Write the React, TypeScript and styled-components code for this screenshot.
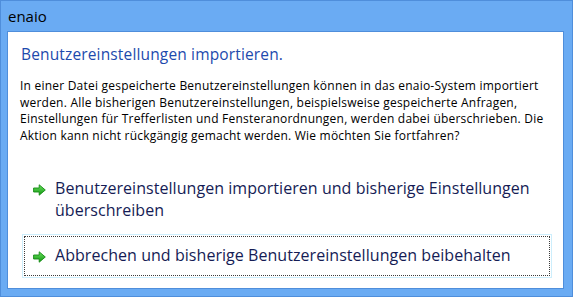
import React from 'react';
import styled, { createGlobalStyle } from 'styled-components';

const GlobalStyle = createGlobalStyle`
  html, body {
    margin: 0;
    padding: 0;
    background: #ffffff;
  }
  body {
    font-family: 'Open Sans', 'Noto Sans', sans-serif;
  }
`;

const Window = styled.div`
  width: 573px;
  height: 297px;
  box-sizing: border-box;
  display: flex;
  flex-direction: column;
  padding: 0 8px 7px 6px;
  background: #6aabf3;
  border: 1px solid #4f8edb;
`;

const TitleBar = styled.div`
  height: 30px;
  display: flex;
  align-items: center;
  padding-left: 1px;
  font-size: 15px;
  color: #000000;
`;

const Panel = styled.div`
  flex: 1;
  background: #ffffff;
  border: 1px solid #4f8edb;
  padding: 11px 12px 0 12px;
`;

const Heading = styled.div`
  font-size: 15.5px;
  letter-spacing: 0.15px;
  line-height: 22px;
  color: #1d4aad;
  padding-left: 1px;
`;

const Message = styled.p`
  margin: 13px 0 0 0;
  font-size: 12px;
  letter-spacing: 0.22px;
  line-height: 16.5px;
  color: #000000;
`;

const CommandList = styled.div`
  display: flex;
  flex-direction: column;
  gap: 2px;
  margin: 23px 0 0 2px;
  width: 530px;
`;

const CommandLink = styled.button<{ $focused?: boolean }>`
  display: flex;
  align-items: flex-start;
  gap: 9px;
  box-sizing: border-box;
  width: 100%;
  padding: 10px 16px 10px 10px;
  background: #ffffff;
  border: 1px solid ${({ $focused }) => ($focused ? '#cdeefc' : 'transparent')};
  outline: ${({ $focused }) => ($focused ? '1px dotted #3c3c3c' : 'none')};
  outline-offset: -3px;
  font-family: inherit;
  font-size: 16px;
  letter-spacing: 0.05px;
  line-height: 21.5px;
  color: #151c55;
  text-align: left;
  cursor: pointer;
`;

const ArrowBox = styled.span`
  flex: none;
  display: flex;
  align-items: center;
  height: 21px;
  padding-top: 1px;
`;

const Label = styled.span`
  flex: 1;
`;

const GreenArrow = () => (
  <svg width="13" height="12" viewBox="0 0 13 12">
    <defs>
      <linearGradient id="ga" x1="0" y1="0" x2="0" y2="1">
        <stop offset="0" stopColor="#6be25f" />
        <stop offset="1" stopColor="#129612" />
      </linearGradient>
    </defs>
    <path
      d="M0.6 4 H6.2 V0.8 L12.3 6 L6.2 11.2 V8 H0.6 Z"
      fill="url(#ga)"
      stroke="#138a13"
      strokeWidth="0.9"
      strokeLinejoin="round"
    />
  </svg>
);

const commands = [
  { label: 'Benutzereinstellungen importieren und bisherige Einstellungen überschreiben', focused: false },
  { label: 'Abbrechen und bisherige Benutzereinstellungen beibehalten', focused: true },
];

export default function App() {
  return (
    <>
      <GlobalStyle />
      <Window>
        <TitleBar>enaio</TitleBar>
        <Panel>
          <Heading>Benutzereinstellungen importieren.</Heading>
          <Message>
            In einer Datei gespeicherte Benutzereinstellungen können in das enaio-System importiert
            werden. Alle bisherigen Benutzereinstellungen, beispielsweise gespeicherte Anfragen,
            Einstellungen für Trefferlisten und Fensteranordnungen, werden dabei überschrieben. Die
            Aktion kann nicht rückgängig gemacht werden. Wie möchten Sie fortfahren?
          </Message>
          <CommandList>
            {commands.map((c) => (
              <CommandLink key={c.label} $focused={c.focused}>
                <ArrowBox>
                  <GreenArrow />
                </ArrowBox>
                <Label>{c.label}</Label>
              </CommandLink>
            ))}
          </CommandList>
        </Panel>
      </Window>
    </>
  );
}
